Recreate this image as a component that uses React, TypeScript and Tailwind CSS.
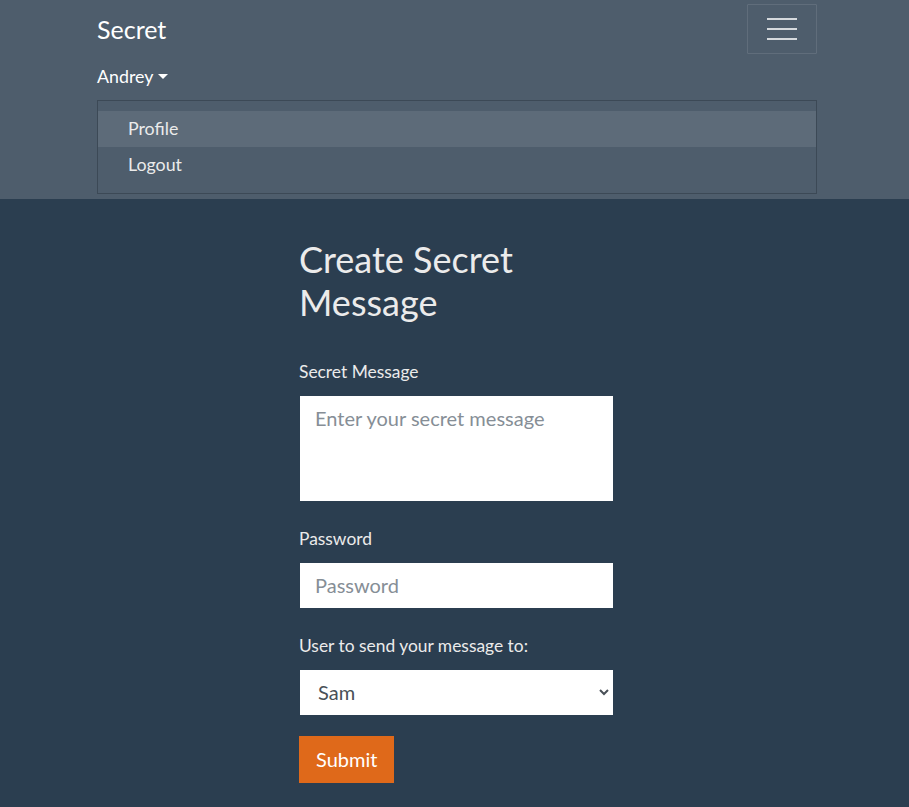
import { useState } from "react";

const font = { fontFamily: "Lato, 'Open Sans', sans-serif" };

function Navbar() {
  const [open, setOpen] = useState(true);
  return (
    <nav className="bg-[#4e5d6c] pb-[5px]">
      <div className="ml-[97px] w-[720px]">
        <div className="flex h-[58px] items-start justify-between pt-[4px]">
          <a href="#" className="mt-[11px] text-[25px] leading-[28px] text-white">
            Secret
          </a>
          <button
            type="button"
            aria-label="Toggle navigation"
            className="flex h-[50px] w-[70px] flex-col items-center justify-center gap-[8px] rounded-[1px] border border-white/10"
          >
            <span className="h-[2px] w-[30px] bg-[#d5d9dd]" />
            <span className="h-[2px] w-[30px] bg-[#d5d9dd]" />
            <span className="h-[2px] w-[30px] bg-[#d5d9dd]" />
          </button>
        </div>
        <button
          type="button"
          onClick={() => setOpen((o) => !o)}
          className="flex h-[36px] items-center gap-[5px] text-[17.8px] text-white"
        >
          Andrey
          <span className="mt-[1px] h-0 w-0 border-x-[5px] border-t-[5px] border-x-transparent border-t-white" />
        </button>
        {open && (
          <ul className="mt-[6px] border border-[#3c4956] bg-[#4e5d6c] py-[10px]">
            <li>
              <a href="#" className="block h-[36px] bg-[#5d6b79] pl-[30px] text-[17.8px] leading-[34px] text-[#ebebeb]">
                Profile
              </a>
            </li>
            <li>
              <a href="#" className="block h-[36px] pl-[30px] text-[17.8px] leading-[34px] text-[#ebebeb]">
                Logout
              </a>
            </li>
          </ul>
        )}
      </div>
    </nav>
  );
}

export default function App() {
  return (
    <div className="min-h-[807px] bg-[#2b3e50] text-[#ebebeb]" style={font}>
      <Navbar />
      <main className="ml-[300px] w-[313px] pt-[39px] pb-[24px]">
        <h1 className="-ml-[1px] text-[36px] leading-[1.2] font-normal text-[#ebebeb]">
          Create Secret Message
        </h1>
        <form className="mt-[36px] flex flex-col" onSubmit={(e) => e.preventDefault()}>
          <label className="-ml-[1px] mb-[12px] text-[17.4px] leading-[24px]">Secret Message</label>
          <textarea
            placeholder="Enter your secret message"
            className="h-[105px] resize-none border border-white bg-white px-[14px] pt-[7px] pb-[9px] text-[20px] leading-[28px] text-[#495057] placeholder:text-[#868e96] outline-none"
          />
          <label className="-ml-[1px] mt-[26px] mb-[12px] text-[17.4px] leading-[24px]">Password</label>
          <input
            type="password"
            placeholder="Password"
            className="h-[45px] border border-white bg-white px-[14px] pb-[2px] text-[20px] text-[#495057] placeholder:text-[#868e96] outline-none"
          />
          <label className="-ml-[1px] mt-[26px] mb-[12px] text-[17.4px] leading-[24px]">
            User to send your message to:
          </label>
          <select
            defaultValue="Sam"
            className="h-[45px] border border-white bg-white px-[13px] pb-[2px] text-[20px] text-[#495057] outline-none"
          >
            <option>Sam</option>
            <option>Anna</option>
          </select>
          <div className="mt-[21px]">
            <button
              type="submit"
              className="-ml-[1px] h-[47px] bg-[#df691a] px-[17px] pb-[2px] text-[20px] text-white"
            >
              Submit
            </button>
          </div>
        </form>
      </main>
    </div>
  );
}
